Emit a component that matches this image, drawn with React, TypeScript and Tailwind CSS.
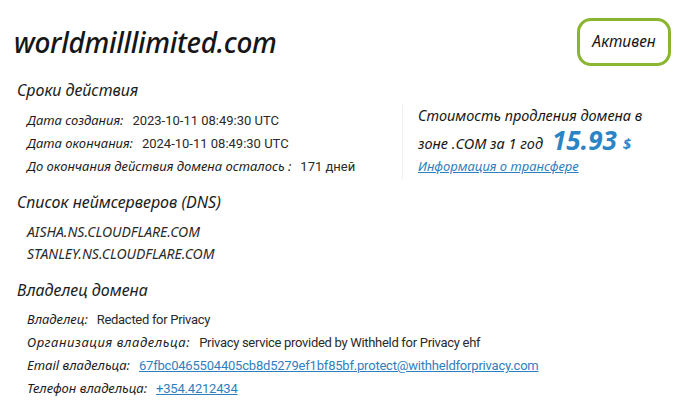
export default function App() {
  const head = "text-[16px] leading-[24px] italic text-[#1c1c1c]";
  const label = "italic text-[#1c1c1c]";
  const date = "ml-[9px] text-[#2a2a2a] font-['Roboto',sans-serif]";
  const value = "ml-[9px] text-[#2a2a2a] font-['Roboto',sans-serif] tracking-[-0.3px]";
  const link = "ml-[9px] text-[#2f7fbf] underline font-['Roboto',sans-serif] tracking-[-0.2px]";

  return (
    <div className="w-[697px] h-[414px] bg-white font-['Noto_Sans',sans-serif] text-[13px] overflow-hidden">
      {/* header */}
      <div className="flex items-center justify-between pl-[14px] pr-[26px] pt-[18px] h-[66px]">
        <h1 className="text-[28px] leading-[48px] font-medium italic text-[#161616] tracking-[-0.3px]">
          worldmilllimited.com
        </h1>
        <div className="w-[94px] h-[48px] rounded-[14px] border-[3px] border-[#8ab52f] flex items-center justify-center italic text-[15.5px] text-[#161616]">
          Активен
        </div>
      </div>

      {/* dates */}
      <div className="pl-[17px] mt-[12px]">
        <h2 className={head}>Сроки действия</h2>
      </div>
      <div className="flex mt-[7px]">
        <div className="w-[402px] pl-[27px] leading-[23px]">
          <div>
            <span className={label}>Дата создания:</span>
            <span className={date}>2023-10-11 08:49:30 UTC</span>
          </div>
          <div>
            <span className={label}>Дата окончания:</span>
            <span className={date}>2024-10-11 08:49:30 UTC</span>
          </div>
          <div>
            <span className={label}>До окончания действия домена осталось :</span>
            <span className={date}>171 дней</span>
          </div>
        </div>
        <div className="border-l border-[#f0f0f0] pl-[15px] -mt-[4px] h-[74px]">
          <div className="italic text-[14.5px] leading-[20px] mb-[3px] text-[#161616]">
            Стоимость продления домена в
          </div>
          <div className="italic text-[14.5px] h-[25px] text-[#161616] flex items-end">
            <span className="leading-[20px]">зоне .COM за 1 год</span>
            <span className="ml-[9px] text-[26px] leading-[26px] font-bold text-[#2a84c6]">15.93</span>
            <span className="ml-[6px] text-[15px] leading-[20px] font-bold text-[#2a84c6]">$</span>
          </div>
          <div className="italic text-[13px] leading-[26px] text-[#2f7fbf] underline">
            Информация о трансфере
          </div>
        </div>
      </div>

      {/* dns */}
      <div className="pl-[17px] mt-[11px]">
        <h2 className={head}>Список неймсерверов (DNS)</h2>
      </div>
      <div className="pl-[27px] mt-[7px] text-[14px] leading-[22px] italic text-[#2a2a2a]">
        <div>AISHA.NS.CLOUDFLARE.COM</div>
        <div>STANLEY.NS.CLOUDFLARE.COM</div>
      </div>

      {/* owner */}
      <div className="pl-[17px] mt-[13px]">
        <h2 className={head}>Владелец домена</h2>
      </div>
      <div className="pl-[27px] mt-[6px] leading-[23px]">
        <div>
          <span className={label}>Владелец:</span>
          <span className={value}>Redacted for Privacy</span>
        </div>
        <div>
          <span className={label + " tracking-[0.6px]"}>Организация владельца:</span>
          <span className={value}>Privacy service provided by Withheld for Privacy ehf</span>
        </div>
        <div>
          <span className={label}>Email владельца:</span>
          <span className={link}>67fbc0465504405cb8d5279ef1bf85bf.protect@withheldforprivacy.com</span>
        </div>
        <div>
          <span className={label}>Телефон владельца:</span>
          <span className={link}>+354.4212434</span>
        </div>
      </div>
    </div>
  );
}
